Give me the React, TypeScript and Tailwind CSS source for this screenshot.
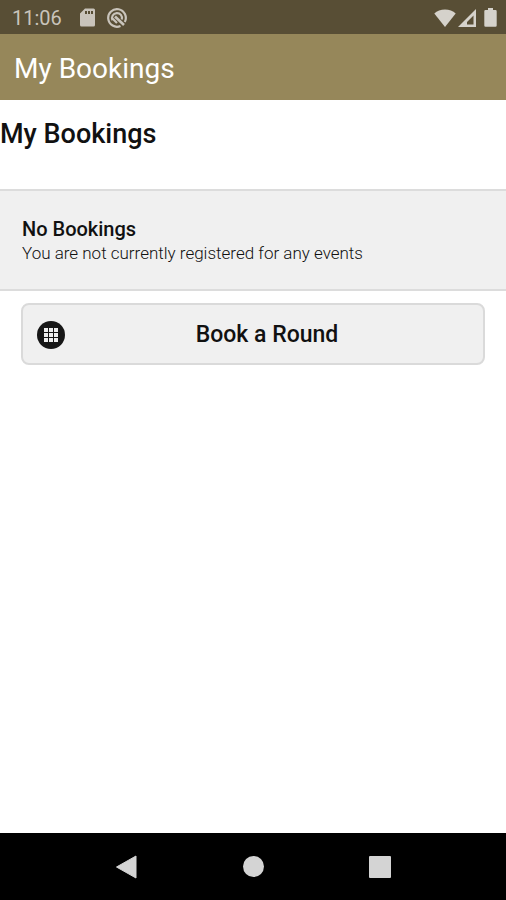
type IconProps = {
  className?: string
}

function SdCardIcon({ className }: IconProps) {
  return (
    <svg viewBox="0 0 15 19" className={className} fill="currentColor" aria-hidden="true">
      <path
        fillRule="evenodd"
        d="M5 0.5H13.5A1.5 1.5 0 0 1 15 2V17A1.5 1.5 0 0 1 13.5 18.5H1.5A1.5 1.5 0 0 1 0 17V5.5ZM5 3V6H7V3ZM8 3V6H10V3ZM11 3V6H13V3Z"
      />
    </svg>
  )
}

function SyncIcon({ className }: IconProps) {
  return (
    <svg viewBox="0 0 20 20" className={className} fill="none" stroke="currentColor" aria-hidden="true">
      <path d="M13.5 18A8.8 8.8 0 1 1 17.8 14" strokeWidth="2.2" />
      <path d="M5.5 12.2A5 5 0 1 1 14.8 11.5" strokeWidth="2.2" />
      <path d="M8 8.5L17 17" strokeWidth="2.6" />
      <path d="M5.5 10.5L10 15" strokeWidth="2.2" />
    </svg>
  )
}

function WifiIcon({ className }: IconProps) {
  return (
    <svg viewBox="0 0 22 18" className={className} fill="currentColor" aria-hidden="true">
      <path d="M11 18L0.3 4.5C3 2 6.8 0.5 11 0.5S19 2 21.7 4.5Z" />
    </svg>
  )
}

function SignalIcon({ className }: IconProps) {
  return (
    <svg viewBox="0 0 18 18" className={className} fill="currentColor" aria-hidden="true">
      <path fillRule="evenodd" d="M18 0V18H0ZM15.5 6.5L9 13V15.5H15.5Z" />
    </svg>
  )
}

function BatteryIcon({ className }: IconProps) {
  return (
    <svg viewBox="0 0 13 19" className={className} fill="currentColor" aria-hidden="true">
      <path d="M4 0H9V2H11.5A1.2 1.2 0 0 1 12.7 3.2V17.5A1.2 1.2 0 0 1 11.5 18.7H1.5A1.2 1.2 0 0 1 0.3 17.5V3.2A1.2 1.2 0 0 1 1.5 2H4Z" />
    </svg>
  )
}

function GridIcon({ className }: IconProps) {
  const cells = [7, 12, 17]

  return (
    <svg viewBox="0 0 28 28" className={className} aria-hidden="true">
      <circle cx="14" cy="14" r="14" fill="#171717" />
      {cells.map((y) =>
        cells.map((x) => (
          <rect key={`${x}-${y}`} x={x} y={y} width="4" height="4" fill="#f0f0f0" />
        ))
      )}
    </svg>
  )
}

function StatusBar() {
  return (
    <div className="flex h-[34px] items-center justify-between bg-[#584e35] pt-px pr-[9px] pl-3 text-[#c9c4bb]">
      <div className="flex items-center">
        <span className="text-xl">11:06</span>
        <SdCardIcon className="ml-[18px] h-[19px] w-[15px]" />
        <SyncIcon className="ml-3 h-5 w-5" />
      </div>
      <div className="flex items-center text-[#d5d2cb]">
        <WifiIcon className="h-[18px] w-[22px]" />
        <SignalIcon className="ml-0.5 h-[18px] w-[18px]" />
        <BatteryIcon className="ml-2 h-[19px] w-[13px]" />
      </div>
    </div>
  )
}

function NavBar() {
  return (
    <nav className="flex h-[67px] justify-center bg-black text-[#d4d4d4]">
      <div className="grid w-3/4 grid-cols-3">
        <button type="button" aria-label="Back" className="flex items-center justify-center">
          <svg viewBox="0 0 22 24" className="h-6 w-[22px]" fill="currentColor">
            <path d="M20 1V23L0.5 12Z" stroke="currentColor" strokeLinejoin="round" />
          </svg>
        </button>
        <button type="button" aria-label="Home" className="flex items-center justify-center">
          <span className="h-[21px] w-[21px] rounded-full bg-[#d4d4d4]" />
        </button>
        <button type="button" aria-label="Recent apps" className="flex items-center justify-center">
          <span className="h-[22px] w-[22px] rounded-[1px] bg-[#d4d4d4]" />
        </button>
      </div>
    </nav>
  )
}

export default function App() {
  return (
    <div className="flex min-h-screen flex-col bg-white font-['Roboto',sans-serif] text-[#111111]">
      <StatusBar />

      <header className="flex h-[66px] items-center bg-[#96875a] px-[14px] pt-1">
        <p className="text-[28px] leading-8 text-white">My Bookings</p>
      </header>

      <main className="flex-1">
        <h1 className="pt-[18px] pb-[39px] text-[27px] leading-8 font-medium">My Bookings</h1>

        <section className="border-y-2 border-[#dcdcdc] bg-[#f0f0f0] px-[22px] pt-[26px] pb-6">
          <h2 className="text-[20px] leading-6 font-medium">No Bookings</h2>
          <p className="text-[17px] leading-6 font-light">
            You are not currently registered for any events
          </p>
        </section>

        <div className="px-[21px] pt-3">
          <button
            type="button"
            className="relative flex h-[62px] w-full items-center justify-center rounded-lg border-2 border-[#dadada] bg-[#f0f0f0] px-12 pt-px"
          >
            <GridIcon className="absolute left-[14px] h-7 w-7" />
            <span className="ml-7 text-[23px] leading-7 font-medium">Book a Round</span>
          </button>
        </div>
      </main>

      <NavBar />
    </div>
  )
}
